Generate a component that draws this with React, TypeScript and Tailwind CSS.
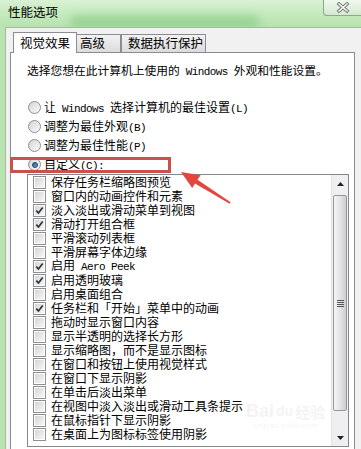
import React from "react";

const options = [
  { label: "让 Windows 选择计算机的最佳设置(L)", on: false },
  { label: "调整为最佳外观(B)", on: false },
  { label: "调整为最佳性能(P)", on: false },
];

const effects: [string, boolean][] = [
  ["保存任务栏缩略图预览", false],
  ["窗口内的动画控件和元素", false],
  ["淡入淡出或滑动菜单到视图", true],
  ["滑动打开组合框", true],
  ["平滑滚动列表框", false],
  ["平滑屏幕字体边缘", false],
  ["启用 Aero Peek", true],
  ["启用透明玻璃", true],
  ["启用桌面组合", false],
  ["任务栏和「开始」菜单中的动画", true],
  ["拖动时显示窗口内容", false],
  ["显示半透明的选择长方形", false],
  ["显示缩略图，而不是显示图标", false],
  ["在窗口和按钮上使用视觉样式", false],
  ["在窗口下显示阴影", false],
  ["在单击后淡出菜单", false],
  ["在视图中淡入淡出或滑动工具条提示", false],
  ["在鼠标指针下显示阴影", false],
  ["在桌面上为图标标签使用阴影", false],
];

// latin runs are half-width in the original (SimSun), so swap them to a narrow mono
function Mixed({ text }: { text: string }) {
  const parts = text.split(/([\x20-\x7e]+)/);
  return (
    <>
      {parts.map((p, i) =>
        /^[\x20-\x7e]+$/.test(p) ? (
          <span
            key={i}
            className="whitespace-pre font-['Liberation_Mono',monospace] text-[11px] tracking-[-0.6px]"
          >
            {p}
          </span>
        ) : (
          <React.Fragment key={i}>{p}</React.Fragment>
        )
      )}
    </>
  );
}

function Radio({ on }: { on?: boolean }) {
  return (
    <span className="flex size-[13px] shrink-0 items-center justify-center rounded-full border border-[#8e8f8f] bg-gradient-to-br from-[#d4d4d4] to-[#fbfbfb]">
      {on && (
        <span className="size-[6px] rounded-full border border-[#1b3f6b] bg-gradient-to-br from-[#2c5d99] to-[#6fa3d8]" />
      )}
    </span>
  );
}

function Check({ on }: { on?: boolean }) {
  return (
    <span className="flex size-[13px] shrink-0 border border-[#8f8f8f] bg-white p-[1px]">
      <span className="flex size-full items-center justify-center bg-gradient-to-br from-[#d6d6d6] to-[#f6f6f6]">
        {on && (
          <svg width="9" height="9" viewBox="0 0 9 9">
            <path d="M1.3 4.6 L3.5 7 L7.7 1.6" fill="none" stroke="#27323f" strokeWidth="1.7" />
          </svg>
        )}
      </span>
    </span>
  );
}

function ScrollBar() {
  return (
    <div className="flex w-[17px] flex-col border-l border-[#e3e3e3] bg-[#efefef]">
      <div className="flex h-[17px] items-center justify-center">
        <svg width="7" height="4" viewBox="0 0 7 4">
          <path d="M0 4 L3.5 0 L7 4 Z" fill="#222" />
        </svg>
      </div>
      <div className="flex-1 pt-[3px]">
        <div className="mx-[1px] flex h-[216px] flex-col items-center justify-center gap-[1px] rounded-[2px] border border-[#979797] bg-gradient-to-r from-[#f5f5f5] via-[#e4e4e4] to-[#cdcdcd]">
          <span className="h-px w-[7px] bg-[#555]" />
          <span className="h-px w-[7px] bg-[#555]" />
          <span className="h-px w-[7px] bg-[#555]" />
          <span className="h-px w-[7px] bg-[#555]" />
        </div>
      </div>
      <div className="flex h-[17px] items-center justify-center">
        <svg width="7" height="4" viewBox="0 0 7 4">
          <path d="M0 0 L3.5 4 L7 0 Z" fill="#222" />
        </svg>
      </div>
    </div>
  );
}

export default function App() {
  return (
    <div className="relative flex h-[449px] w-[361px] flex-col overflow-hidden bg-[#b9e3b1] font-['Noto_Sans_CJK_SC',sans-serif] text-black">
      {/* title bar */}
      <div className="relative flex h-[27px] items-start overflow-hidden bg-gradient-to-b from-[#d9f1d4] via-[#c5eabe] to-[#b8e2b0]">
        <div className="absolute left-[70px] top-[16px] h-[12px] w-[190px] rounded-full bg-[#86ca82] opacity-70 blur-[5px]" />
        <span className="relative mt-[5px] pl-[8px] text-[12.5px] leading-[14px]">性能选项</span>
        <div className="relative ml-auto flex h-[16px] w-[38px] items-center justify-center rounded-bl-[4px] border-b border-l border-[#8fa58d] bg-gradient-to-b from-[#f1f8ef] to-[#d3e9cf]">
          <svg width="14" height="11" viewBox="0 0 14 11">
            <path d="M3 2 L11 9 M11 2 L3 9" stroke="#6d7d6c" strokeWidth="3.4" strokeLinecap="square" />
            <path d="M3 2 L11 9 M11 2 L3 9" stroke="#ffffff" strokeWidth="1.5" strokeLinecap="square" />
          </svg>
        </div>
      </div>

      {/* body */}
      <div className="flex flex-1">
        <div className="w-[5px] bg-[#b9e3b1]" />
        <div className="flex flex-1 flex-col border-l border-t border-[#a3bba0] bg-[#f1f1f1]">
          {/* tabs */}
          <div className="flex h-[24px] items-end pl-[7px] text-[12.5px] leading-none">
            <div className="relative z-10 -mb-px flex h-[21px] w-[64px] items-center justify-center border border-b-0 border-[#898c95] bg-white">
              视觉效果
            </div>
            <div className="flex h-[18px] w-[44px] items-center border border-b-0 border-l-0 border-[#898c95] bg-gradient-to-b from-[#f2f2f2] to-[#dcdcdc] pl-[3px]">
              高级
            </div>
            <div className="flex h-[18px] w-[85px] items-center border border-b-0 border-[#898c95] bg-gradient-to-b from-[#f2f2f2] to-[#dcdcdc] pl-[6px]">
              数据执行保护
            </div>
          </div>

          {/* panel */}
          <div className="ml-[4px] mr-[6px] flex-1 border border-b-0 border-[#898c95] bg-white pl-[16px] pr-[5px] pt-[10px]">
            <p className="h-[14px] whitespace-nowrap text-[11.75px] leading-[14px]">
              <Mixed text="选择您想在此计算机上使用的 Windows 外观和性能设置。" />
            </p>

            <div className="mt-[21px] flex flex-col text-[12px]">
              {options.map((o) => (
                <div key={o.label} className="flex h-[19px] items-center gap-[3px] pl-[1px]">
                  <Radio on={o.on} />
                  <span className="whitespace-nowrap leading-[15px]">
                    <Mixed text={o.label} />
                  </span>
                </div>
              ))}
              <div className="relative flex h-[19px] items-center gap-[3px] pl-[1px]">
                <Radio on />
                <span className="whitespace-nowrap leading-[15px]">
                  <Mixed text="自定义(C):" />
                </span>
                <div className="absolute left-[-17px] top-[2px] h-[16px] w-[161px] border-[3px] border-[#c9534c]" />
              </div>
            </div>

            {/* effects list */}
            <div className="flex h-[273px] border border-[#828790] bg-white">
              <div className="flex-1">
                {effects.map(([label, on]) => (
                  <div key={label} className="flex h-[14px] items-center gap-[5px] pl-[5px] text-[12px]">
                    <Check on={on} />
                    <span className="whitespace-nowrap leading-[14px]">
                      <Mixed text={label} />
                    </span>
                  </div>
                ))}
              </div>
              <ScrollBar />
            </div>
          </div>
        </div>
      </div>

      {/* annotation arrow */}
      <svg className="pointer-events-none absolute left-0 top-0" width="361" height="449" viewBox="0 0 361 449">
        <polygon
          points="181,172 200.5,175.3 197.5,179.8 230.6,202.2 229.6,203.8 195,183.5 192.2,188"
          fill="#e2463d"
        />
      </svg>

      {/* faint watermark */}
      <div className="pointer-events-none absolute left-[246px] top-[402px] flex flex-col items-center opacity-40">
        <div className="flex items-center gap-[2px] font-['Liberation_Sans',sans-serif] text-[18px] font-bold leading-none text-[#e2e2e2]">
          <span>Bai</span>
          <span className="text-[14px]">du</span>
          <span className="font-['Noto_Sans_CJK_SC',sans-serif] text-[15px]">经验</span>
        </div>
        <span className="mt-[2px] font-['Liberation_Sans',sans-serif] text-[8px] leading-none text-[#e8e8e8]">
          jingyan.baidu.com
        </span>
      </div>
    </div>
  );
}
